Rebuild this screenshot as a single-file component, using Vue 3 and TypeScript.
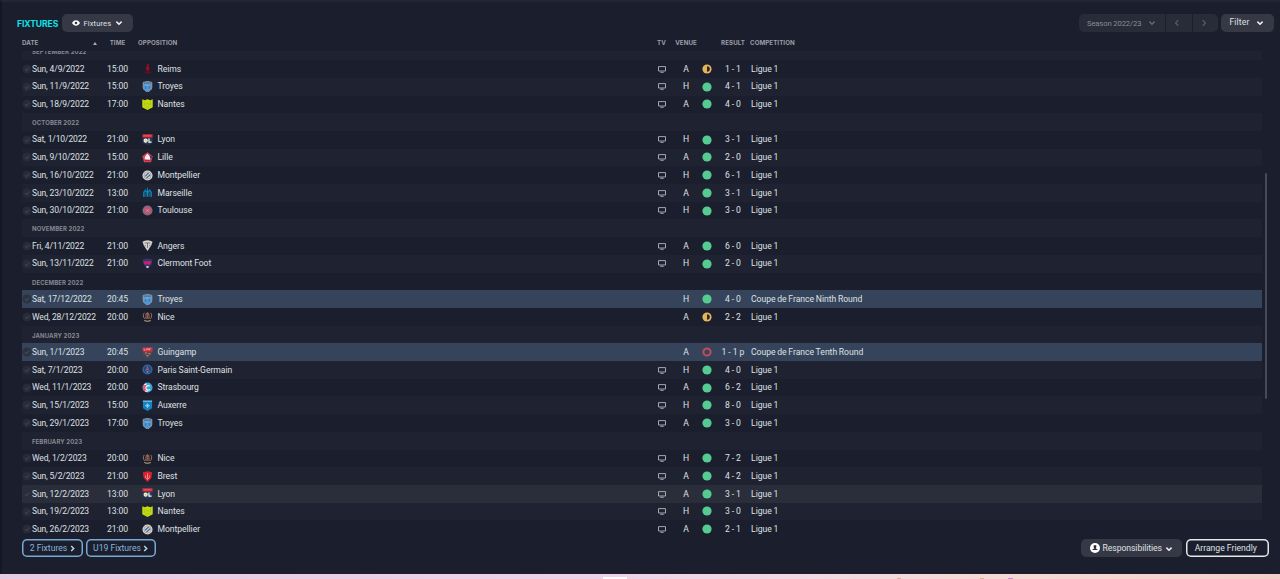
<template>
  <div class="screen">
    <main class="panel">
      <header class="toolbar">
        <h1 class="title">FIXTURES</h1>
        <button class="btn view-btn">
          <svg class="eye" viewBox="0 0 8 6">
            <path fill-rule="evenodd" d="M0 3C1.2 1 2.5.3 4 .3S6.800 1 8 3C6.800 5 5.500 5.700 4 5.700S1.200 5 0 3ZM4 1.700a1.300 1.300 0 1 0 0 2.600a1.300 1.300 0 1 0 0-2.600Z" />
          </svg>
          <span>Fixtures</span>
          <svg class="chevron" viewBox="0 0 8 6"><path d="M1.400 1.600 4 4.200 6.600 1.600" /></svg>
        </button>
        <div class="season">
          <button class="season-name">
            <span>Season 2022/23</span>
            <svg class="chevron" viewBox="0 0 8 6"><path d="M1.400 1.600 4 4.200 6.600 1.600" /></svg>
          </button>
          <button class="season-step"><svg viewBox="0 0 6 8"><path d="M4.200 1.200 1.600 4 4.200 6.800" /></svg></button>
          <button class="season-step"><svg viewBox="0 0 6 8"><path d="M1.800 1.200 4.400 4 1.800 6.800" /></svg></button>
        </div>
        <button class="btn filter-btn">
          <span>Filter</span>
          <svg class="chevron" viewBox="0 0 8 6"><path d="M1.400 1.600 4 4.200 6.600 1.600" /></svg>
        </button>
      </header>

      <div class="head grid">
        <span class="h-date">DATE<i class="sort"></i></span>
        <span class="center">TIME</span>
        <span class="h-opp">OPPOSITION</span>
        <span class="center">TV</span>
        <span class="center">VENUE</span>
        <span></span>
        <span class="center">RESULT</span>
        <span class="h-comp">COMPETITION</span>
      </div>

      <section class="list">
        <div class="rows">
          <div
            v-for="(row, i) in rows"
            :key="i"
            class="row"
            :class="{ striped: i % 2 === 0, cup: row.cup, hover: row.hover }"
          >
            <div v-if="row.month" class="month">{{ row.month }}</div>
            <div v-else class="grid cells">
              <svg class="check" viewBox="0 0 10 10">
                <circle cx="5" cy="5" r="4.500" />
                <path d="M3 5.200 4.500 6.600 7.200 3.600" />
              </svg>
              <span class="date">{{ row.date }}</span>
              <span class="center time">{{ row.time }}</span>
              <svg class="crest" viewBox="0 0 12 12">
                <path
                  v-for="(s, n) in crests[row.team!]"
                  :key="n"
                  :d="s.d"
                  :fill="s.f || 'none'"
                  :stroke="s.s || 'none'"
                  :stroke-width="s.w || 1"
                />
              </svg>
              <span class="team">{{ row.team }}</span>
              <span class="center">
                <svg v-if="row.tv" class="tv" viewBox="0 0 8 7">
                  <path d="M.5.6h7v4.400h-7ZM2.300 6.300h3.400" />
                </svg>
              </span>
              <span class="center">{{ row.venue }}</span>
              <span class="center">
                <svg class="dot" viewBox="0 0 10 10">
                  <circle v-if="row.outcome === 'win'" cx="5" cy="5" r="4.600" fill="#56cb91" />
                  <template v-else-if="row.outcome === 'draw'">
                    <circle cx="5" cy="5" r="4.600" fill="#e3b45a" />
                    <path d="M5 2.200a2.800 2.800 0 0 1 0 5.600Z" fill="#29232a" />
                  </template>
                  <circle v-else cx="5" cy="5" r="3.600" fill="none" stroke="#c34b5c" stroke-width="2" />
                </svg>
              </span>
              <span class="center result">{{ row.result }}</span>
              <span class="comp">{{ row.cup || 'Ligue 1' }}</span>
            </div>
          </div>
        </div>
        <div class="scrollbar"></div>
      </section>

      <footer class="footer">
        <button class="outline blue two">2 Fixtures <svg viewBox="0 0 5 7"><path d="M1.200 1 3.700 3.500 1.200 6" /></svg></button>
        <button class="outline blue u19">U19 Fixtures <svg viewBox="0 0 5 7"><path d="M1.200 1 3.700 3.500 1.200 6" /></svg></button>
        <button class="btn resp-btn">
          <svg class="person" viewBox="0 0 10 10">
            <circle cx="5" cy="5" r="5" fill="#fff" />
            <path d="M3.700 2.200h2.600v2.300L5.600 5.300 8 6.900H2L4.400 5.300 3.700 4.500Z" fill="#262936" />
          </svg>
          <span>Responsibilities</span>
          <svg class="chevron" viewBox="0 0 8 6"><path d="M1.400 1.600 4 4.200 6.600 1.600" /></svg>
        </button>
        <button class="outline white">Arrange Friendly</button>
      </footer>
    </main>
    <div class="desktop-strip">
      <i class="blip tab"></i>
      <i class="blip tan"></i>
      <i class="blip tan second"></i>
      <i class="blip violet"></i>
    </div>
  </div>
</template>

<script setup lang="ts">
interface Row {
  month?: string;
  date?: string;
  time?: string;
  team?: string;
  tv?: boolean;
  venue?: string;
  outcome?: 'win' | 'draw' | 'loss';
  result?: string;
  cup?: string;
  hover?: boolean;
}

interface Shape {
  d: string;
  f?: string;
  s?: string;
  w?: number;
}

const month = (name: string): Row => ({ month: name });

const game = (
  date: string,
  time: string,
  team: string,
  venue: string,
  result: string,
  extra: Partial<Row> = {}
): Row => ({ date, time, team, venue, result, tv: true, outcome: 'win', ...extra });

const rows: Row[] = [
  month('SEPTEMBER 2022'),
  game('Sun, 4/9/2022', '15:00', 'Reims', 'A', '1 - 1', { outcome: 'draw' }),
  game('Sun, 11/9/2022', '15:00', 'Troyes', 'H', '4 - 1'),
  game('Sun, 18/9/2022', '17:00', 'Nantes', 'A', '4 - 0'),
  month('OCTOBER 2022'),
  game('Sat, 1/10/2022', '21:00', 'Lyon', 'H', '3 - 1'),
  game('Sun, 9/10/2022', '15:00', 'Lille', 'A', '2 - 0'),
  game('Sun, 16/10/2022', '21:00', 'Montpellier', 'H', '6 - 1'),
  game('Sun, 23/10/2022', '13:00', 'Marseille', 'A', '3 - 1'),
  game('Sun, 30/10/2022', '21:00', 'Toulouse', 'H', '3 - 0'),
  month('NOVEMBER 2022'),
  game('Fri, 4/11/2022', '21:00', 'Angers', 'A', '6 - 0'),
  game('Sun, 13/11/2022', '21:00', 'Clermont Foot', 'H', '2 - 0'),
  month('DECEMBER 2022'),
  game('Sat, 17/12/2022', '20:45', 'Troyes', 'H', '4 - 0', { tv: false, cup: 'Coupe de France Ninth Round' }),
  game('Wed, 28/12/2022', '20:00', 'Nice', 'A', '2 - 2', { tv: false, outcome: 'draw' }),
  month('JANUARY 2023'),
  game('Sun, 1/1/2023', '20:45', 'Guingamp', 'A', '1 - 1 p', { tv: false, outcome: 'loss', cup: 'Coupe de France Tenth Round' }),
  game('Sat, 7/1/2023', '20:00', 'Paris Saint-Germain', 'H', '4 - 0'),
  game('Wed, 11/1/2023', '20:00', 'Strasbourg', 'A', '6 - 2'),
  game('Sun, 15/1/2023', '15:00', 'Auxerre', 'H', '8 - 0'),
  game('Sun, 29/1/2023', '17:00', 'Troyes', 'A', '3 - 0'),
  month('FEBRUARY 2023'),
  game('Wed, 1/2/2023', '20:00', 'Nice', 'H', '7 - 2'),
  game('Sun, 5/2/2023', '21:00', 'Brest', 'A', '4 - 2'),
  game('Sun, 12/2/2023', '13:00', 'Lyon', 'A', '3 - 1', { hover: true }),
  game('Sun, 19/2/2023', '13:00', 'Nantes', 'H', '3 - 0'),
  game('Sun, 26/2/2023', '21:00', 'Montpellier', 'A', '2 - 1')
];

const round = 'M6 .5a5.500 5.500 0 1 0 0 11a5.500 5.500 0 1 0 0-11Z';
const shield = 'M1.300 1.500 6 .5 10.700 1.500V7C10.700 9.500 8 11 6 11.800C4 11 1.300 9.500 1.300 7Z';

// Club crests, simplified to a few shapes each
const crests: Record<string, Shape[]> = {
  Reims: [
    { d: 'M5 1.500 6.500.5 8 2 7 3.500 8.500 5 8 8H4.500L4 5 5.500 3.500Z', f: '#7c1020' },
    { d: 'M3 9h6.500v2.500H3Z', f: '#5d1020' },
    { d: 'M6.300 2.500v6', s: '#951425', w: 1.4 }
  ],
  Troyes: [
    { d: shield, f: '#5197d0', s: '#93a3b0', w: 1 },
    { d: 'M2 2.300h8', s: '#5d6d80', w: 1.2 },
    { d: 'M3 4.500h6', s: '#8dbfe6', w: 0.8 },
    { d: 'M4 5.500v3.200M8 5v3.500', s: '#2f72b4', w: 1 }
  ],
  Nantes: [
    { d: 'M.3.3 3 1.300 6 .3 9 1.300 11.700.3V9L6 12 .3 9Z', f: '#c3da12' },
    { d: 'M3 3.500v4M4.800 5.500 6.500 4.500 7.500 7M9.200 3v4M4 8.800h4', s: '#95b814', w: 0.7 }
  ],
  Lyon: [
    { d: 'M.5.3h11v3.700H.5Z', f: '#d92d3d' },
    { d: 'M.5 4h11v5.800L6 12 .5 9.800Z', f: '#263958' },
    { d: 'M4 5.400a1.700 1.800 0 1 0 0 3.600a1.700 1.800 0 1 0 0-3.600Z', f: '#e7c55a', s: '#fff', w: 1.1 },
    { d: 'M7.600 4.900v4h2.800', s: '#fff', w: 1.3 },
    { d: 'M2 2h8', s: '#ec6870', w: 0.8 }
  ],
  Lille: [
    { d: 'M6 .3 11.700 4.500 9.800 11.300H2.200L.3 4.500Z', f: '#d8485a' },
    { d: 'M5.700 1.800 9.500 5.500 8.500 8.500 3 8 3.200 5.500Z', f: '#f1f0f5' },
    { d: 'M8 3.500 11 5 9.800 8Z', f: '#253459' },
    { d: 'M3 9.500h6', s: '#b3243c', w: 1.2 }
  ],
  Montpellier: [
    { d: round, f: '#dedcd8' },
    { d: 'M6 2a4 4 0 1 0 0 8a4 4 0 1 0 0-8Z', f: '#c9d1da', s: '#9b7e70', w: 0.6 },
    { d: 'M3.200 7 7.300 3.200M4.800 8.800 9 5', s: '#3f5a80', w: 1.2 }
  ],
  Marseille: [
    { d: 'M2 11V6L3.500 3.500 6 6 8.500 3.500 10 6V11', s: '#0878b0', w: 1.8 },
    { d: 'M6 .8v10M4.300 6v4.500M7.700 6v4.500', s: '#1495ca', w: 0.9 }
  ],
  Toulouse: [
    { d: round, f: '#7f6c80' },
    { d: 'M6 2.200a3.800 3.800 0 1 0 0 7.600a3.800 3.800 0 1 0 0-7.600Z', f: '#bd5274' },
    { d: 'M4 4.500 8 7.500M8 4.500 4 7.500', s: '#d898ad', w: 0.7 }
  ],
  Angers: [
    { d: 'M.5 1.800 3 .8 6 .3 9 .8 11.500 1.800 10 6 6 12 2 6Z', f: '#d5d3cf' },
    { d: 'M3 3.300h6M6 3.300v5.500M3.500 5.500v1.300M8.500 5.500v1.300', s: '#676361', w: 0.9 }
  ],
  'Clermont Foot': [
    { d: 'M.5 2C4 .2 8 .2 11.500 2L10 7.500 6 11.800 2 7.500Z', f: '#2d3b70' },
    { d: 'M1.500 3.500h9L9.800 5.600 7.500 7.800 6 6 4.500 7.800 2.200 5.600Z', f: '#d51c68' },
    { d: 'M4.900 8.800h2.200v2H4.900Z', f: '#e9dfe7' }
  ],
  Nice: [
    { d: 'M2.500 2C1 4 1 7 3 8.500M9.500 2C11 4 11 7 9 8.500', s: '#a57a62', w: 1 },
    { d: 'M4 3 6 1.200 8 3 8.500 8.500H3.500Z', f: '#99654f' },
    { d: 'M5 4v4M7 4v4', s: '#4a2c29', w: 0.7 },
    { d: 'M2.500 10.300Q6 12 9.500 10.300', s: '#b9a493', w: 1.1 }
  ],
  Guingamp: [
    { d: 'M.5.5h11L10.500 8 6 12 1.500 8Z', f: '#5f4648' },
    { d: 'M.5.5h11v4.300H1Z', f: '#d5303f' },
    { d: 'M2.300 1.800v1.700h1.500M5.200 3.500v-1.700h1.500v1.700M8 3.500v-1.700h1.500', s: '#f4b9bd', w: 0.8 },
    { d: 'M3.500 6.500h2M7 7.300h2M5 9.500h2', s: '#cfa8a0', w: 0.9 }
  ],
  'Paris Saint-Germain': [
    { d: round, f: '#2a6ba8' },
    { d: 'M6 2a4 4 0 1 0 0 8a4 4 0 1 0 0-8Z', f: '#1d4880' },
    { d: 'M6 2.500 5.300 5.500 4 8M6 2.500 6.700 5.500 8 8M4.600 6h2.800', s: '#c9536a', w: 0.9 },
    { d: 'M5 8.700h2', s: '#dce4eb', w: 0.8 }
  ],
  Strasbourg: [
    { d: round, f: '#3aa7dc' },
    { d: 'M1 3.500 4.500 3 5.500 10.500 3.500 10.700C1 9 .5 6 1 3.500Z', f: '#e0566a' },
    { d: 'M8.500 4.500a2.500 2.500 0 1 0 .2 3.500M2.500 3 5 2M3.500 9.500 6 10.500', s: '#f0f4f9', w: 1.3 }
  ],
  Auxerre: [
    { d: 'M1 .5h10V9L6 12 1 9Z', f: '#1183c3' },
    { d: 'M1 1.300h10', s: '#a5cfe5', w: 1 },
    { d: 'M6 3.500v5.400M3.300 6.200h5.400M4.500 4.700 7.500 7.700M7.500 4.700 4.500 7.700', s: '#b9e0f1', w: 0.7 }
  ],
  Brest: [
    { d: 'M1 1.300 6 .3 11 1.300 10.200 7.500 6 12 1.800 7.500Z', f: '#d9202f' },
    { d: 'M6 2.500v6.500M4 4.800v2.500L6 9 8 7.300v-2.500', s: '#f0a6a9', w: 0.8 }
  ]
};
</script>

<style>
body {
  background: #1b1e2c;
  overflow: hidden;
}
</style>

<style scoped>
.screen {
  height: 579px;
  display: flex;
  flex-direction: column;
  font-family: Roboto, "Liberation Sans", sans-serif;
  font-size: 8.6px;
  color: #dfe0e4;
  overflow: hidden;
}

.panel {
  height: 574px;
  box-sizing: border-box;
  flex: none;
  display: flex;
  flex-direction: column;
  background: #1b1e2c;
  border-top: 2px solid #232634;
  border-left: 2px solid #171625;
}

button {
  font: inherit;
  color: inherit;
  border: 0;
  margin: 0;
  padding: 0;
  background: none;
  display: flex;
  align-items: center;
  white-space: nowrap;
  box-sizing: border-box;
}

svg {
  display: block;
  flex: none;
}

.toolbar {
  display: flex;
  align-items: flex-start;
  height: 35px;
  box-sizing: border-box;
  padding: 12px 6px 0 15px;
}

.title {
  width: 45px;
  margin: 0;
  padding-top: 1px;
  font: 700 8.6px/18px Inter, sans-serif;
  letter-spacing: -0.1px;
  color: #0ce5e9;
}

.btn {
  height: 18px;
  border-radius: 5px;
  background: #363945;
}

.view-btn {
  width: 71px;
  padding-left: 10px;
  font-size: 7.6px;
  letter-spacing: 0.1px;
}

.eye {
  width: 8px;
  height: 6px;
  margin-right: 3.500px;
  fill: #fff;
}

.chevron {
  width: 8px;
  height: 6px;
  fill: none;
  stroke: #f0f0f3;
  stroke-width: 1.500;
}

.view-btn .chevron {
  margin-left: 4px;
}

.season {
  display: flex;
  gap: 1px;
  height: 18px;
  margin-left: auto;
  margin-right: 3px;
  border-radius: 5px;
  overflow: hidden;
  color: #8a8c96;
  font-size: 7.6px;
}

.season button {
  background: #282b38;
  height: 18px;
}

.season-name {
  width: 86px;
  padding-left: 8px;
}

.season-name span {
  letter-spacing: -0.1px;
}

.season-name .chevron {
  margin-left: 6.500px;
  stroke: #62656f;
}

.season-step {
  width: 25.500px;
  justify-content: center;
}

.season-step svg {
  width: 6px;
  height: 8px;
  margin-right: 3px;
  fill: none;
  stroke: #575a66;
  stroke-width: 1.300;
}

.filter-btn {
  width: 53px;
  padding: 0 0 2px 8.500px;
  letter-spacing: 0.12px;
}

.filter-btn .chevron {
  margin: 2px 0 0 7px;
}

.grid {
  display: grid;
  grid-template-columns: 10px 65px 41px 19.500px 491.500px 25px 24px 17px 36px 1fr;
  align-items: center;
}

.center {
  display: flex;
  justify-content: center;
}

.head {
  height: 14px;
  margin-left: 20px;
  grid-template-columns: 75px 41px 511px 25px 24px 17px 36px 1fr;
  font: 700 6.2px/12px Inter, sans-serif;
  letter-spacing: 0.06px;
  color: #9b9da5;
  padding-bottom: 2px;
  box-sizing: border-box;
}

.h-date {
  display: flex;
  align-items: center;
  justify-content: space-between;
}

.sort {
  border: 2px solid transparent;
  border-top: 0;
  border-bottom: 3px solid #a9abb2;
}

.h-comp {
  margin-left: -1px;
}

.list {
  display: flex;
  height: 487px;
  flex: none;
  overflow: hidden;
  margin-left: 20px;
}

.rows {
  width: 1240px;
  margin-top: -8.600px;
}

.row {
  height: 17.715px;
}

.striped {
  background: #1f2230;
}

.hover {
  background: #2a2d3a;
}

.cup {
  background: #35445b;
}

.month {
  padding-left: 10px;
  font: 700 6px/19px Inter, sans-serif;
  letter-spacing: 0.1px;
  color: #868891;
}

.cells {
  height: 100%;
  line-height: 17px;
  white-space: nowrap;
}

.cells > span {
  padding-top: 0.400px;
}

.check {
  width: 10px;
  height: 10px;
  opacity: 0.8;
}

.check circle {
  fill: #2b2e3a;
}

.check path {
  fill: none;
  stroke: #484b56;
  stroke-width: 1.100;
}

.date {
  font-size: 8.500px;
  letter-spacing: -0.12px;
}

.time {
  letter-spacing: -0.1px;
}

.team {
  letter-spacing: -0.05px;
  word-spacing: -0.200px;
}

.comp {
  word-spacing: -0.500px;
}

.crest {
  width: 11px;
  height: 11px;
  margin-left: 3.500px;
}

.tv {
  width: 8px;
  height: 7px;
  fill: none;
  stroke: #b3b5bc;
  stroke-width: 0.900;
}

.dot {
  width: 10px;
  height: 10px;
  margin: -0.500px 0 0;
}

.result {
  letter-spacing: 0.1px;
  word-spacing: -0.400px;
}

.scrollbar {
  width: 2px;
  height: 226px;
  margin: 122px 0 0 3px;
  border-radius: 1px;
  background: #484a58;
}

.footer {
  display: flex;
  gap: 3.500px;
  height: 18px;
  padding: 1px 11px 0 20px;
}

.outline {
  height: 18px;
  border-radius: 5px;
  justify-content: center;
  padding-bottom: 1px;
}

.blue {
  box-shadow: inset 0 0 0 1.500px #78a9d2;
  color: #8ab4da;
}

.blue svg {
  width: 5px;
  height: 7px;
  margin: 1px 0 0 2.500px;
  fill: none;
  stroke: #b5d5ef;
  stroke-width: 1.500;
}

.two {
  width: 60.500px;
}

.u19 {
  width: 69.500px;
}

.resp-btn {
  width: 101px;
  margin-left: auto;
  padding-left: 8.500px;
}

.resp-btn span {
  padding-bottom: 1px;
  letter-spacing: -0.05px;
}

.person {
  width: 10px;
  height: 10px;
  margin-right: 3px;
}

.resp-btn .chevron {
  margin: 1px 0 0 3.500px;
}

.white {
  width: 83.500px;
  padding-right: 3px;
  box-shadow: inset 0 0 0 1.500px #e5e6ea;
}

.desktop-strip {
  position: relative;
  height: 5px;
  background: linear-gradient(90deg, #e6cae3 0%, #ecd1e8 45%, #f1d8e3 62%, #f6d9d5 78%, #f4cfca 100%);
}

.blip {
  position: absolute;
  bottom: 0;
  height: 1px;
}

.tab {
  left: 603px;
  width: 24px;
  height: 2px;
  background: #fff8ff;
}

.tan {
  left: 897px;
  width: 4px;
  background: #d6b3a0;
}

.second {
  left: 980px;
}

.violet {
  left: 1008px;
  width: 5px;
  background: #c98bd8;
}
</style>
